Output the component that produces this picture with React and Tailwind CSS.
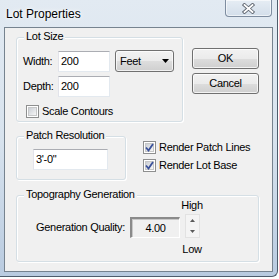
import React from 'react';

const font = { fontFamily: '"Liberation Sans", Arial, sans-serif' };

export default function App() {
  return (
    <div className="w-[279px] h-[279px] bg-white overflow-hidden" style={font}>
      <div className="relative w-[278px] h-[277px] rounded-br-[6px] border-r border-b border-[#4e5d6c] bg-gradient-to-b from-[#e2eaf2] via-[#d8e3ee] to-[#b9cbe0]">
        <TitleBar />
        <div className="ml-[4px] w-[269px] h-[245px] border border-[#76838f] bg-[#f0f0f0] pl-[11px] pt-[9px] text-[11px] leading-[13px] tracking-[-0.3px] text-black">
          <div className="flex items-start">
            <GroupBox title="Lot Size" className="w-[167px] h-[85px] pt-[13px] pl-[6px]">
              <div className="flex items-center">
                <span className="w-[35px]">Width:</span>
                <TextBox value="200" className="w-[52px]" />
                <ComboBox value="Feet" />
              </div>
              <div className="flex items-center mt-[4px]">
                <span className="w-[35px]">Depth:</span>
                <TextBox value="200" className="w-[52px]" />
              </div>
              <div className="mt-[8px] pl-[3px]">
                <CheckBox label="Scale Contours" />
              </div>
            </GroupBox>
            <div className="ml-[9px] mt-[11px] flex flex-col gap-[4px]">
              <PushButton label="OK" />
              <PushButton label="Cancel" />
            </div>
          </div>

          <div className="flex items-start mt-[14px]">
            <GroupBox title="Patch Resolution" className="w-[110px] h-[44px] pt-[12px] pl-[16px]">
              <TextBox value={'3\'-0"'} className="w-[75px] pl-[1px]" />
            </GroupBox>
            <div className="ml-[17px] mt-[5px] flex flex-col gap-[5px]">
              <CheckBox label="Render Patch Lines" checked />
              <CheckBox label="Render Lot Base" checked />
            </div>
          </div>

          <GroupBox title="Topography Generation" className="mt-[15px] w-[243px] h-[67px] pt-[3px] pl-[19px]">
            <div className="flex items-center">
              <span className="w-[94px] whitespace-nowrap">Generation Quality:</span>
              <div className="w-[50px] h-[21px] flex items-center justify-center border-t-2 border-l-2 border-r border-b border-t-[#8a8a8a] border-l-[#8a8a8a] border-r-white border-b-white bg-[#f0f0f0] shadow-[inset_1px_1px_0_#c8c8c8]">
                4.00
              </div>
              <div className="ml-[1px] w-[22px] flex flex-col items-center">
                <span>High</span>
                <Spinner />
                <span className="mt-[5px]">Low</span>
              </div>
            </div>
          </GroupBox>
        </div>
      </div>
    </div>
  );
}

function TitleBar() {
  return (
    <div className="relative h-[27px] flex items-center pl-[6px]">
      <span className="text-[12px] text-black [text-shadow:0_0_6px_#ffffff,0_0_3px_#ffffff]">Lot Properties</span>
      <div className="absolute top-0 right-[5px] w-[47px] h-[17px] rounded-b-[4px] border border-t-0 border-[#7e8da0] bg-gradient-to-b from-[#e6edf4] to-[#d3deea] shadow-[inset_0_0_0_1px_rgba(255,255,255,0.6)] flex items-center justify-center">
        <svg width="13" height="11" viewBox="0 0 13 11">
          <path d="M2.5 2 L10.5 9 M10.5 2 L2.5 9" stroke="#5f6670" strokeWidth="3.6" strokeLinecap="square" />
          <path d="M2.5 2 L10.5 9 M10.5 2 L2.5 9" stroke="#ffffff" strokeWidth="1.8" strokeLinecap="square" />
        </svg>
      </div>
    </div>
  );
}

function GroupBox({ title, className = '', children }) {
  return (
    <div className={`relative rounded-[3px] border border-[#d5dfe5] shadow-[inset_1px_1px_0_#ffffff,1px_1px_0_#ffffff] ${className}`}>
      <span className="absolute -top-[8px] left-[7px] px-[2px] bg-[#f0f0f0] whitespace-nowrap">{title}</span>
      {children}
    </div>
  );
}

function TextBox({ value, className = '' }) {
  return (
    <div className={`h-[21px] flex items-center pl-[2px] bg-white border border-[#e3e9ef] border-t-[#abadb3] border-l-[#e2e3ea] ${className}`}>
      {value}
    </div>
  );
}

function ComboBox({ value }) {
  return (
    <div className="ml-[5px] w-[59px] h-[22px] -mt-[1px] flex items-center justify-between pl-[4px] pr-[4px] rounded-[3px] border border-[#707070] bg-[linear-gradient(to_bottom,#f2f2f2_0%,#ebebeb_50%,#dddddd_51%,#cfcfcf_100%)] shadow-[inset_0_0_0_1px_rgba(255,255,255,0.7)]">
      <span>{value}</span>
      <svg width="7" height="4" viewBox="0 0 7 4">
        <path d="M0 0 H7 L3.5 4 Z" fill="#000000" />
      </svg>
    </div>
  );
}

function PushButton({ label }) {
  return (
    <div className="w-[67px] h-[21px] flex items-center justify-center rounded-[3px] border border-[#707070] bg-[linear-gradient(to_bottom,#f2f2f2_0%,#ebebeb_50%,#dddddd_51%,#cfcfcf_100%)] shadow-[inset_0_0_0_1px_rgba(255,255,255,0.75)]">
      {label}
    </div>
  );
}

function CheckBox({ label, checked = false }) {
  return (
    <div className="flex items-center">
      <div className="w-[13px] h-[13px] border border-[#8e8f8f] bg-white p-[1px]">
        <div className="w-full h-full border border-[#c6c7c8] bg-gradient-to-br from-[#cbcfd5] to-[#f6f6f6] flex items-center justify-center">
          {checked && (
            <svg width="9" height="9" viewBox="0 0 9 9" className="-m-[1px]">
              <path d="M1 4.5 L3.5 7.5 L8 1" stroke="#3a519a" strokeWidth="1.8" fill="none" />
            </svg>
          )}
        </div>
      </div>
      <span className="ml-[3px] whitespace-nowrap">{label}</span>
    </div>
  );
}

function Spinner() {
  return (
    <div className="mt-[2px] w-[15px] h-[24px] border border-[#e2e2e2] bg-[#f4f4f4] flex flex-col items-center justify-between py-[4px]">
      <svg width="5" height="3" viewBox="0 0 5 3">
        <path d="M0 3 H5 L2.5 0 Z" fill="#5a5a5a" />
      </svg>
      <svg width="5" height="3" viewBox="0 0 5 3">
        <path d="M0 0 H5 L2.5 3 Z" fill="#5a5a5a" />
      </svg>
    </div>
  );
}
